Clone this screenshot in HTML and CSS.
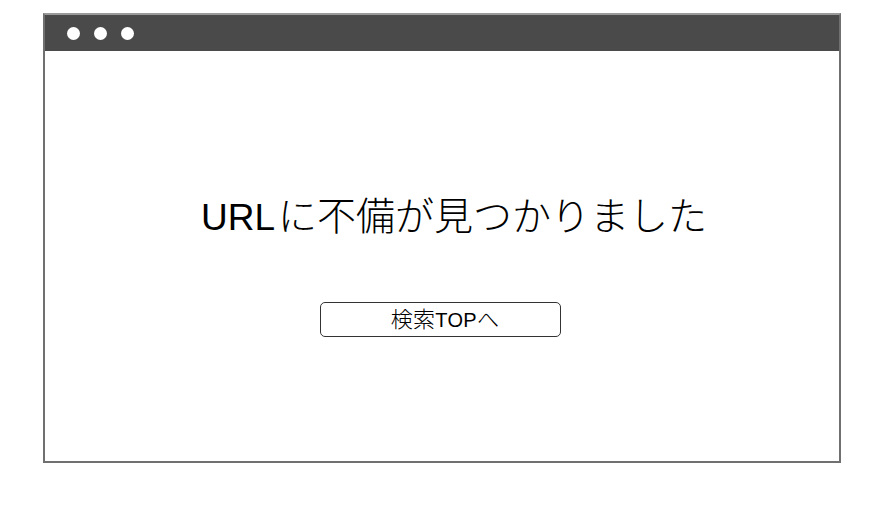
FILE: index.html
```html
<!DOCTYPE html>
<html lang="ja">
<head>
<meta charset="utf-8">
<title>URLに不備が見つかりました</title>
<link rel="stylesheet" href="styles.css">
</head>
<body>
<div class="window">
  <div class="titlebar">
    <span class="dot"></span><span class="dot"></span><span class="dot"></span>
  </div>
  <div class="content">
    <h1 class="message"><span class="latin">URL</span>に不備が見つかりました</h1>
    <button class="top-button" type="button">検索<span class="latin">TOP</span>へ</button>
  </div>
</div>
</body>
</html>
```
FILE: styles.css
```css
html, body {
  margin: 0;
  padding: 0;
  background: #ffffff;
}
body {
  font-family: "Liberation Sans", "Noto Sans CJK JP", sans-serif;
  color: #000;
}
.window {
  box-sizing: border-box;
  margin: 13px 0 0 43px;
  width: 798px;
  height: 450px;
  border: 2px solid #707070;
  border-top-color: #9a9a9a;
  display: flex;
  flex-direction: column;
  background: #fff;
}
.titlebar {
  height: 36px;
  background: #4a4a4a;
  display: flex;
  align-items: center;
  gap: 14px;
  padding-left: 22px;
  flex: none;
}
.dot {
  width: 13px;
  height: 13px;
  border-radius: 50%;
  background: #fff;
}
.content {
  flex: 1;
  display: flex;
  flex-direction: column;
  align-items: center;
  padding-top: 143px;
}
.message {
  margin: 0 0 0 24px;
  font-size: 39px;
  font-weight: 300;
  line-height: 46px;
  white-space: nowrap;
}
.message .latin {
  font-size: 37px;
  font-weight: normal;
  margin-right: 3px;
}
.top-button {
  margin: 61px 3px 0 0;
  box-sizing: border-box;
  width: 241px;
  height: 35px;
  border: 1px solid #333;
  border-radius: 5px;
  background: #fff;
  font-family: "Liberation Sans", "Noto Sans CJK JP", sans-serif;
  font-size: 22px;
  font-weight: 300;
  color: #000;
  padding: 0 0 0 9px;
  line-height: 33px;
  letter-spacing: 0.3px;
  white-space: nowrap;
}
.top-button .latin {
  font-size: 20px;
  font-weight: normal;
}
```
